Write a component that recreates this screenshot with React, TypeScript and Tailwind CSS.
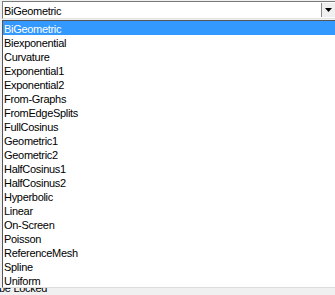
import React from "react";

const items = [
  "BiGeometric",
  "Biexponential",
  "Curvature",
  "Exponential1",
  "Exponential2",
  "From-Graphs",
  "FromEdgeSplits",
  "FullCosinus",
  "Geometric1",
  "Geometric2",
  "HalfCosinus1",
  "HalfCosinus2",
  "Hyperbolic",
  "Linear",
  "On-Screen",
  "Poisson",
  "ReferenceMesh",
  "Spline",
  "Uniform",
];

export default function App() {
  return (
    <div className="relative w-[335px] h-[295px] overflow-hidden bg-[#f0f0f0] font-['Liberation_Sans',Arial,sans-serif] text-[11px] tracking-[-0.3px] text-black">
      <div className="pt-[1px] pl-[2px]">
        <div className="flex h-[18px] w-[333px] border-t border-l border-[#7a7a7a] border-b border-b-[#e3e3e3] bg-white">
          <div className="flex-1 pl-[1px] pt-[1px] leading-[16px] whitespace-nowrap">BiGeometric</div>
          <div className="my-[1px] flex w-[14px] items-center justify-center border-l border-[#8a8a8a] bg-[#f0f0f0]">
            <svg width="7" height="4" viewBox="0 0 7 4">
              <polygon points="0,0 7,0 3.5,4" fill="#000" />
            </svg>
          </div>
        </div>
      </div>
      <div className="mt-[269px] h-[7px] overflow-hidden">
        <div className="-mt-[7px] -ml-[1px] leading-[14px] whitespace-nowrap">be Locked</div>
      </div>

      <div className="absolute left-[2px] top-[20px] w-[340px] border-t border-l border-[#555555] border-b border-b-[#dcdcdc] bg-white">
        {items.map((it, i) => (
          <div
            key={it}
            className={
              i === 0
                ? "h-[14px] pl-[1px] leading-[16px] whitespace-nowrap bg-[#3399ff] text-white"
                : "h-[14px] pl-[1px] leading-[16px] whitespace-nowrap"
            }
          >
            {it}
          </div>
        ))}
      </div>
    </div>
  );
}
